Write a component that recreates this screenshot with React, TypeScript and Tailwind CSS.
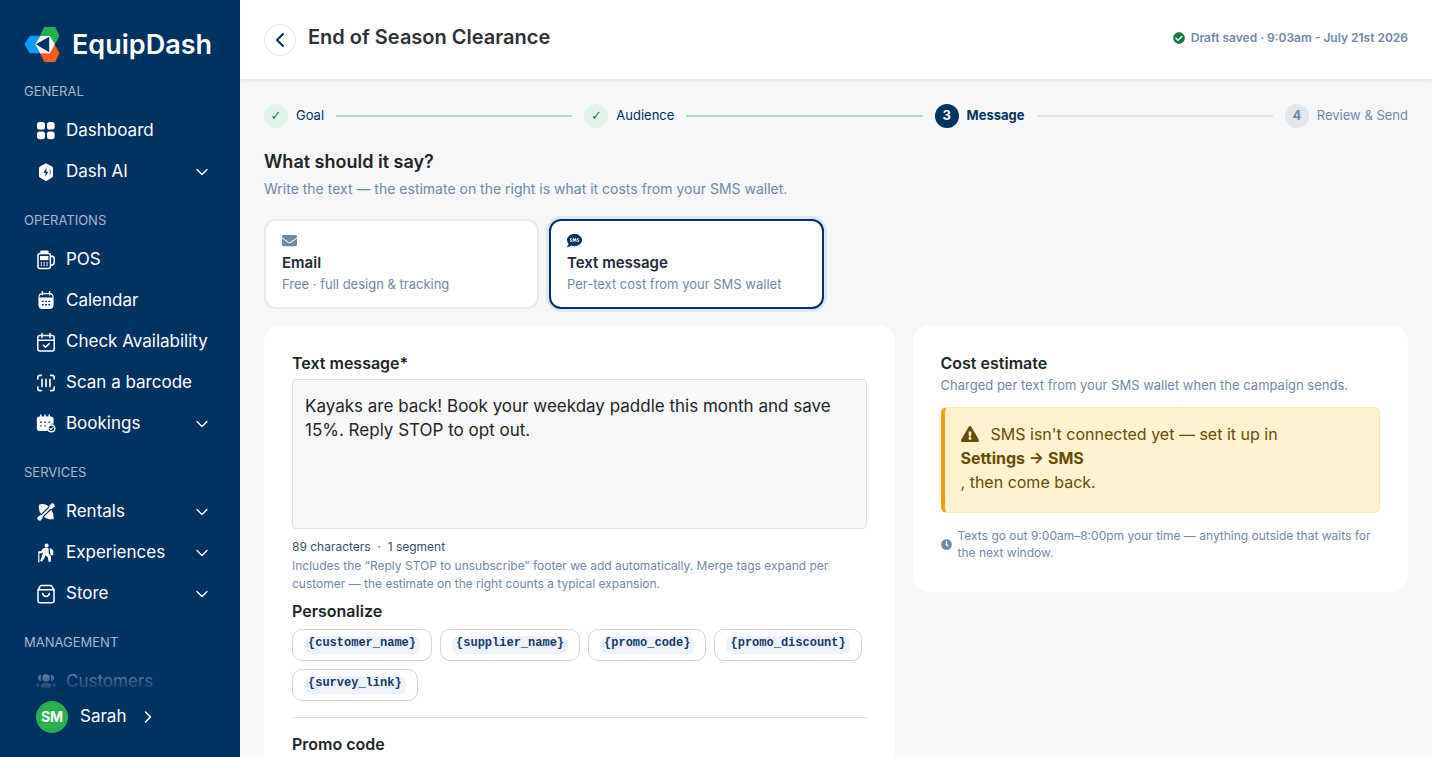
import React, { useState } from 'react';
import { FaCheckCircle, FaClock, FaEnvelope, FaExclamationTriangle, FaSms } from 'react-icons/fa';
import { ChevronDown, ChevronLeft, ChevronRight } from 'lucide-react';

type IconName =
  | 'dashboard' | 'ai' | 'pos' | 'calendar' | 'availability' | 'barcode'
  | 'bookings' | 'rentals' | 'experiences' | 'store' | 'customers';

interface NavEntry {
  label: string;
  icon: IconName;
  expandable?: boolean;
}

const navSections: { title: string; items: NavEntry[] }[] = [
  {
    title: 'General',
    items: [
      { label: 'Dashboard', icon: 'dashboard' },
      { label: 'Dash AI', icon: 'ai', expandable: true },
    ],
  },
  {
    title: 'Operations',
    items: [
      { label: 'POS', icon: 'pos' },
      { label: 'Calendar', icon: 'calendar' },
      { label: 'Check Availability', icon: 'availability' },
      { label: 'Scan a barcode', icon: 'barcode' },
      { label: 'Bookings', icon: 'bookings', expandable: true },
    ],
  },
  {
    title: 'Services',
    items: [
      { label: 'Rentals', icon: 'rentals', expandable: true },
      { label: 'Experiences', icon: 'experiences', expandable: true },
      { label: 'Store', icon: 'store', expandable: true },
    ],
  },
  {
    title: 'Management',
    items: [{ label: 'Customers', icon: 'customers' }],
  },
];

const mergeTags = ['{customer_name}', '{supplier_name}', '{promo_code}', '{promo_discount}', '{survey_link}'];

const steps = ['Goal', 'Audience', 'Message', 'Review & Send'];
const currentStep = 2;

const line = { fill: 'none', stroke: 'currentColor', strokeWidth: 1.5, strokeLinecap: 'round', strokeLinejoin: 'round' } as const;
const navy = '#003262';

const iconShapes: Record<IconName, React.ReactNode> = {
  dashboard: (
    <g fill="currentColor">
      <rect x="1" y="1" width="8" height="7.6" rx="2.6" />
      <rect x="11" y="1" width="7.6" height="7.6" rx="2.6" />
      <rect x="1" y="10.6" width="8" height="7.6" rx="2.6" />
      <rect x="11" y="10.6" width="7.6" height="7.6" rx="2.6" />
    </g>
  ),
  ai: (
    <g>
      <path d="M10 1.2 L16 4.6 Q17 5.2 17 6.2 V14 Q17 15 16 15.6 L10 19.2 L4 15.6 Q3 15 3 14 V6.2 Q3 5.2 4 4.6Z" fill="currentColor" />
      <path d="M10.6 6 L7.4 10.8 H9.6 L9.2 14.6 L12.4 9.8 H10.4Z" fill={navy} />
      <path d="M13.6 7.4 Q15.2 9.6 13.8 12.6" stroke={navy} strokeWidth="0.7" fill="none" />
    </g>
  ),
  pos: (
    <g>
      <path d="M4.4 1.2 Q4.4 .4 5.2 .4 H11.6 Q12.4 .4 12.4 1.2 V4 H4.4Z" fill="currentColor" />
      <rect x="2" y="3.6" width="12.4" height="14.8" rx="2" {...line} />
      <rect x="4" y="6" width="8.4" height="4.2" fill="currentColor" />
      <path d="M14.6 6.2 H16 Q18.2 6.2 18.2 8.6 V12.4 Q18.2 15 14.8 15.2" {...line} />
      <path d="M4.6 12.8h1.6M7.4 12.8H9M10.2 12.8h1.6M4.6 15.2h1.6M7.4 15.2H9M10.2 15.2h1.6" stroke="currentColor" strokeWidth="1.3" />
    </g>
  ),
  calendar: (
    <g>
      <path d="M6.4 .8v3M13.6 .8v3" {...line} />
      <path d="M3 6 Q3 2.6 6.4 2.6 H13.6 Q17 2.6 17 6" {...line} strokeWidth="1.2" />
      <path d="M2.4 6.4 H17.6 V13.8 Q17.6 18 13.4 18 H6.6 Q2.4 18 2.4 13.8Z" fill="currentColor" />
      <path d="M5.8 10.4h1.8M9.1 10.4h1.8M12.4 10.4h1.8M5.8 13.8h1.8M9.1 13.8h1.8M12.4 13.8h1.8" stroke={navy} strokeWidth="1.4" />
    </g>
  ),
  availability: (
    <g {...line}>
      <rect x="1.8" y="3.6" width="16.4" height="15.4" rx="2" />
      <path d="M2 8.2h16M6 1.6v4M14 1.6v4M7.4 13.2l2 2 3.8-3.6" />
    </g>
  ),
  barcode: (
    <g {...line} strokeWidth="1.6">
      <path d="M1.8 6V4.6Q1.8 2.4 4 2.4H5.4M14.6 2.4H16Q18.2 2.4 18.2 4.6V6M18.2 14V15.4Q18.2 17.6 16 17.6H14.6M5.4 17.6H4Q1.8 17.6 1.8 15.4V14M6 6.4v7.2M10 6.4v7.2M14 6.4v7.2" />
    </g>
  ),
  bookings: (
    <g>
      <path d="M4.8 1v3M9 1v3M13.2 1v3" {...line} />
      <path d="M.8 5.2Q.8 2.4 3.6 2.4H14.8Q17.6 2.4 17.6 5.2V9.6Q12 9.6 11.6 17H3.6Q.8 17 .8 14.2Z" fill="currentColor" />
      <path d="M4 8.2h1.8M8.2 8.2H10M12.4 8.2h1.8M4 12h1.8M8.2 12H10" stroke={navy} strokeWidth="1.2" />
      <circle cx="15.4" cy="14.4" r="3.4" {...line} strokeWidth="1.4" />
      <path d="M13.8 14.4l1.2 1.2 2-2" {...line} strokeWidth="1.2" />
    </g>
  ),
  rentals: (
    <g>
      <path d="M3.4 2.4Q9.4 1 13.6 5.4Q18 10.4 17.6 17.2Q10.8 17.8 6.2 13.4Q1.4 8.4 3.4 2.4Z" fill="currentColor" />
      <path d="M3 17L17 3" stroke={navy} strokeWidth="4" />
      <path d="M4.6 15.4L15.4 4.6" {...line} strokeWidth="1.7" />
      <path d="M1.2 15.6 4.8 12.8 7 15 4.8 18.6Q1.4 19.2 1.2 15.6ZM18.8 4.4 15.2 7.2 13 5 15.2 1.4Q18.6 .8 18.8 4.4Z" fill="currentColor" />
    </g>
  ),
  experiences: (
    <g fill="currentColor">
      <circle cx="10.6" cy="2.4" r="2" />
      <path d="M6.4 6.2Q7.6 4.8 9.6 4.8L12.6 5.2 12.8 10.4 15 13.2 14.8 18.8H12.4L12 14.4 9.2 12 8.8 14.4 6 18.8 4 17.8 6 13.6 7 8.6 6 10.2H2.8V8.2H5Z" />
      <path d="M13.6 5.2Q16.8 5.4 17.2 8.6L17.4 11.8Q16 12.8 14.4 11.8Z" />
      <path d="M2.8 8.8V19" {...line} strokeWidth="1.2" />
    </g>
  ),
  store: (
    <g {...line}>
      <path d="M2 6L4.2 2.2Q4.6 1.4 5.6 1.4H14.4Q15.4 1.4 15.8 2.2L18 6V16.8Q18 18.8 16 18.8H4Q2 18.8 2 16.8Z" />
      <path d="M2.2 5.8h15.6M6.6 9.4Q7.2 12.4 10 12.4T13.4 9.4" />
    </g>
  ),
  customers: (
    <g fill="currentColor">
      <circle cx="10" cy="6" r="3.8" />
      <path d="M5.2 3Q2.2 3.2 2 6T5.2 9.2Q4.2 6 5.2 3ZM14.8 3Q17.8 3.2 18 6T14.8 9.2Q15.8 6 14.8 3Z" />
      <ellipse cx="10" cy="13.8" rx="5.6" ry="2.8" />
      <path d="M3.2 11.2Q.2 11.8 .4 14L3 15Q2.4 12.8 3.2 11.2ZM16.8 11.2Q19.8 11.8 19.6 14L17 15Q17.6 12.8 16.8 11.2Z" />
    </g>
  ),
};

const Logo = () => (
  <svg viewBox="0 0 105 108" className="size-9 shrink-0" aria-hidden="true">
    <path d="M59 0H92L105 26 92 51 46 27Z" fill="#27ae4f" />
    <path d="M0 52 16 26H47L32 52 47 79H16Z" fill="#0a9dfc" />
    <path d="M46 79 92 54 105 79 92 105H60Z" fill="#fb5a23" />
    <path d="M47 27H76L91 52 76 79H47L32 52Z" fill="#ffffff" />
    <path d="M34 52 74 29V76Z" fill={navy} />
  </svg>
);

const NavItem: React.FC<{ item: NavEntry }> = ({ item }) => (
  <a href="#" className="flex h-[41px] items-center pr-7 pl-9 text-[17px] whitespace-nowrap text-white">
    <svg viewBox="0 0 20 20" className="mr-2.5 size-5 shrink-0" aria-hidden="true">{iconShapes[item.icon]}</svg>
    <span className="grow">{item.label}</span>
    {item.expandable && <ChevronDown className="size-5 shrink-0" strokeWidth={1.6} />}
  </a>
);

const Sidebar = () => (
  <aside className="relative flex w-60 shrink-0 flex-col overflow-hidden bg-[#003262]">
    <div className="flex items-center gap-3 px-6 pt-[27px] text-white">
      <Logo />
      <span className="text-[27px] leading-9 font-semibold">EquipDash</span>
    </div>
    <nav className="min-h-0 grow overflow-hidden pt-[19px]">
      {navSections.map(section => (
        <div key={section.title} className="mb-[19px]">
          <h2 className="mb-2.5 px-6 text-[13px] leading-[18px] text-[#a9b9ca] uppercase">{section.title}</h2>
          {section.items.map(item => <NavItem key={item.label} item={item} />)}
        </div>
      ))}
    </nav>
    <div className="absolute inset-x-0 bottom-0">
      <div className="h-12 bg-linear-to-b from-transparent to-[#003262]" />
      <button type="button" className="flex w-full items-center bg-[#003262] px-9 pt-2 pb-6 text-[17px] text-white">
        <span className="mr-3 flex size-8 items-center justify-center rounded-full bg-[#28b04f] text-sm font-bold">SM</span>
        Sarah
        <ChevronRight className="ml-3 size-5" strokeWidth={1.8} />
      </button>
    </div>
  </aside>
);

const Stepper = () => (
  <ol className="flex items-center gap-3 text-[13px]">
    {steps.map((step, i) => {
      const done = i < currentStep;
      const active = i === currentStep;
      return (
        <React.Fragment key={step}>
          {i > 0 && <li aria-hidden="true" className={`h-0.5 grow ${i <= currentStep ? 'bg-[#b3d6c2]' : 'bg-[#dde3e9]'}`} />}
          <li className={`flex items-center gap-2 ${active ? 'font-bold text-[#003262]' : done ? 'text-[#003262]' : 'text-[#7089a6]'}`}>
            <span className={`flex size-6 items-center justify-center rounded-full ${active ? 'bg-[#003262] font-bold text-white' : done ? "bg-[#e1f5ea] font-['DejaVu_Sans',sans-serif] text-[#1a7f45]" : 'bg-[#e2e7ec] font-bold'}`}>
              {done ? '✓' : i + 1}
            </span>
            {step}
          </li>
        </React.Fragment>
      );
    })}
  </ol>
);

interface ChannelCardProps {
  icon: React.ReactNode;
  title: string;
  detail: string;
  selected: boolean;
  onClick: () => void;
}

const ChannelCard: React.FC<ChannelCardProps> = ({ icon, title, detail, selected, onClick }) => (
  <button
    type="button"
    aria-pressed={selected}
    onClick={onClick}
    className={`w-[275px] rounded-xl border-2 bg-white px-4 pt-3 pb-[13px] text-left ${selected ? 'border-[#003262] ring-3 ring-[#e0e6ee]' : 'border-[#e9eaec]'}`}
  >
    <span className={`block text-[15px] ${selected ? 'text-[#003262]' : 'text-[#7089a6]'}`}>{icon}</span>
    <span className="mt-1 block text-[15px] leading-[22px] font-semibold text-[#212b3a]">{title}</span>
    <span className="block text-[13px] leading-5 text-[#7089a6]">{detail}</span>
  </button>
);

export default function App() {
  const [channel, setChannel] = useState('sms');
  const [message, setMessage] = useState('Kayaks are back! Book your weekday paddle this month and save 15%. Reply STOP to opt out.');

  return (
    <div className="flex h-screen overflow-hidden bg-[#f5f7f9] font-['Inter',sans-serif] text-[#212529]">
      <Sidebar />
      <div className="flex min-w-0 grow flex-col">
        <header className="flex h-[79px] shrink-0 items-center bg-white px-6 shadow-[0_1px_4px_rgba(0,0,0,0.12)]">
          <button type="button" aria-label="Back" className="mr-3 flex size-8 items-center justify-center rounded-full border border-[#e3e5e8] text-[#003262]">
            <ChevronLeft className="size-6" strokeWidth={2} />
          </button>
          <h1 className="grow pb-1.5 text-xl font-semibold text-[#2f3135]">End of Season Clearance</h1>
          <p className="flex items-center gap-1.5 pb-1 text-xs font-semibold text-[#7089a6]">
            <FaCheckCircle className="text-[#157a40]" />
            Draft saved · 9:03am - July 21st 2026
          </p>
        </header>

        <main className="min-h-0 grow overflow-hidden px-6 pt-[25px]">
          <Stepper />
          <h2 className="mt-5 text-lg leading-7 font-semibold">What should it say?</h2>
          <p className="mt-0.5 text-sm leading-[22px] text-[#7089a6]">
            Write the text — the estimate on the right is what it costs from your SMS wallet.
          </p>

          <div className="mt-[19px] flex gap-2.5">
            <ChannelCard icon={<FaEnvelope />} title="Email" detail="Free · full design & tracking" selected={channel === 'email'} onClick={() => setChannel('email')} />
            <ChannelCard icon={<FaSms />} title="Text message" detail="Per-text cost from your SMS wallet" selected={channel === 'sms'} onClick={() => setChannel('sms')} />
          </div>

          <div className="mt-4 grid grid-cols-[14fr_11fr] items-start gap-[18px]">
            <section className="rounded-2xl bg-white px-7 pt-6 pb-10">
              <label htmlFor="message" className="block text-base leading-7 font-semibold">Text message*</label>
              <textarea
                id="message"
                value={message}
                onChange={e => setMessage(e.target.value)}
                className="mt-0.5 block h-[150px] w-full resize-none rounded border border-[#dcdfe3] bg-[#f8f8f8] px-3 py-3.5 text-[17px] leading-6 outline-none"
              />
              <p className="mt-2 text-xs leading-5 text-[#3b5068]">{message.length} characters &nbsp;·&nbsp; 1 segment</p>
              <p className="text-xs leading-[18px] text-[#7089a6]">
                Includes the “Reply STOP to unsubscribe” footer we add automatically. Merge tags expand per customer — the estimate on the right counts a typical expansion.
              </p>
              <h3 className="mt-1 text-base leading-7 font-semibold">Personalize</h3>
              <div className="mt-1 flex flex-wrap gap-2">
                {mergeTags.map(tag => (
                  <button key={tag} type="button" className="flex h-8 items-center rounded-[10px] border border-[#c8d4e0] px-[11px]">
                    <code className="rounded-md bg-[#eef3fa] px-1 pb-1 font-['Liberation_Mono',monospace] text-xs leading-[14px] font-bold text-[#143a66]">{tag}</code>
                  </button>
                ))}
              </div>
              <hr className="my-4 border-[#dee2e6]" />
              <h3 className="text-base leading-5 font-semibold">Promo code</h3>
            </section>

            <aside className="rounded-2xl bg-white px-7 pt-6 pb-[31px]">
              <h3 className="text-base leading-7 font-semibold">Cost estimate</h3>
              <p className="text-[13px] leading-4 text-[#7089a6]">Charged per text from your SMS wallet when the campaign sends.</p>
              <div className="mt-3.5 rounded-md border border-l-4 border-[#ffe69c] border-l-[#f59e0b] bg-[#fff2ce] px-4 pt-3.5 pb-[18px] text-base leading-6 text-[#664d03]">
                <FaExclamationTriangle className="mr-3 inline size-[18px] align-[-3px]" />
                SMS isn't connected yet — set it up in
                <strong className="block font-bold">Settings → SMS</strong>
                , then come back.
              </div>
              <p className="mt-3.5 flex items-center gap-1.5 text-xs leading-[17px] text-[#7089a6]">
                <FaClock className="size-[11px] shrink-0" />
                Texts go out 9:00am–8:00pm your time — anything outside that waits for the next window.
              </p>
            </aside>
          </div>
        </main>
      </div>
    </div>
  );
}
